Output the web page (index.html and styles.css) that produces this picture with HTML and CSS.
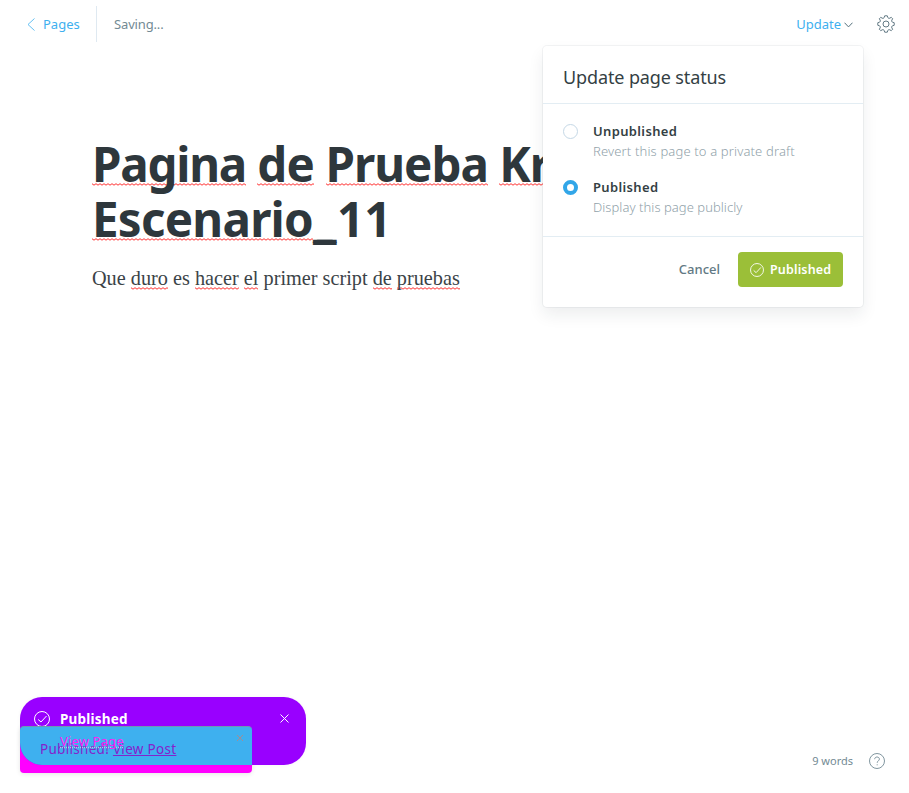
FILE: index.html
```html
<!DOCTYPE html>
<html lang="es">
<head>
<meta charset="utf-8">
<title>Editor</title>
<link rel="stylesheet" href="styles.css">
</head>
<body>
<div class="editor">
  <header class="bar">
    <a class="back"><svg width="8" height="13" viewBox="0 0 8 13"><path d="M7.5.5 1 6.5l6.5 6"/></svg><span>Pages</span></a>
    <span class="saving">Saving...</span>
    <div class="actions">
      <a class="update"><span>Update</span><svg width="9" height="6" viewBox="0 0 9 6"><path d="M.5.7l4 4.2 4-4.2"/></svg></a>
      <svg class="gear" width="18" height="18" viewBox="-9 -9 18 18"><path d="M8.200 -1.300V1.300L6.300 1.900Q5.300 2.600 5.800 3.900L6.700 5.200L5.200 6.700L3.900 5.800Q2.600 5.300 1.900 6.300L1.300 8.200H-1.300L-1.900 6.300Q-2.600 5.300 -3.900 5.800L-5.200 6.700L-6.700 5.200L-5.800 3.900Q-5.300 2.600 -6.300 1.900L-8.200 1.300V-1.300L-6.300 -1.900Q-5.300 -2.600 -5.800 -3.900L-6.700 -5.200L-5.200 -6.700L-3.900 -5.800Q-2.600 -5.300 -1.900 -6.300L-1.300 -8.200H1.300L1.900 -6.300Q2.600 -5.300 3.900 -5.800L5.200 -6.700L6.700 -5.200L5.800 -3.900Q5.300 -2.600 6.300 -1.900Z"/><circle r="3"/></svg>
    </div>
  </header>
  <main class="content">
    <h1 class="title"><span class="bad t1">Pagina</span> <span class="bad t2">de</span> <span class="bad t3">Prueba</span> <span class="bad t4">Kraken</span><br><span class="bad t5">Escenario</span><span class="t6">_</span><span class="t7">11</span></h1>
    <p class="text">Que <span class="bad">duro</span> es <span class="bad">hacer</span> <span class="bad">el</span> primer script <span class="bad">de</span> <span class="bad">pruebas</span></p>
  </main>
</div>

<section class="menu">
  <h2 class="menu-head">Update page status</h2>
  <div class="options">
    <div class="option"><i class="radio"></i><div><div class="name">Unpublished</div><div class="desc d1">Revert this page to a private draft</div></div></div>
    <div class="option"><i class="radio on"></i><div><div class="name">Published</div><div class="desc d2">Display this page publicly</div></div></div>
  </div>
  <footer class="menu-foot">
    <span class="cancel">Cancel</span>
    <span class="button"><svg width="14" height="14" viewBox="0 0 16 16"><circle cx="8" cy="8" r="7.400"/><path d="M4.200 8.500 7 11l5.500-6"/></svg><span>Published</span></span>
  </footer>
</section>

<div class="toast-under"></div>
<div class="toast">
  <div class="overlap"><span class="post">Published! <u>View Post</u></span><svg class="close-small" width="8" height="8" viewBox="0 0 8 8"><path d="M1 1l6 6M7 1 1 7"/></svg></div>
  <svg class="toast-check" width="16" height="16" viewBox="0 0 16 16"><circle cx="8" cy="8" r="7.500"/><path d="M4.200 8.500 7 11l5.500-6"/></svg>
  <div class="toast-copy"><div class="toast-title">Published</div><div class="toast-link">View Page</div></div>
  <svg class="close" width="9" height="9" viewBox="0 0 9 9"><path d="M.5.5l8 8M8.500.5l-8 8"/></svg>
</div>

<div class="status"><span>9 words</span><svg width="16" height="16" viewBox="0 0 16 16"><circle cx="8" cy="8" r="7.500"/><path d="M5.700 6.200C5.700 4.800 6.700 4 8 4s2.400.8 2.400 2.100C10.400 7.700 8.200 7.900 8.200 9.800M8.200 11.300v1"/></svg></div>
</body>
</html>
```

FILE: styles.css
```css
* { box-sizing: border-box; }
body { margin: 0; width: 909px; height: 793px; overflow: hidden; background: #fff; color: #394047; font-family: "Noto Sans", sans-serif; font-size: 13px; }
svg { display: block; fill: none; stroke: currentColor; flex: none; }
.bar { display: flex; align-items: center; height: 48px; padding: 0 15px 0 27px; }
.back { display: flex; align-items: center; gap: 8px; width: 70px; height: 36px; border-right: 1px solid #dfe9f1; color: #3eb0ef; }
.back svg { stroke-width: .8; }
.saving { margin-left: 17px; color: #738a94; letter-spacing: -.15px; }
.actions { display: flex; align-items: center; margin-left: auto; color: #738a94; }
.update { display: flex; align-items: center; gap: 3px; margin-right: 24px; color: #3eb0ef; }
.update svg { color: #55707c; margin-top: 2px; }
.gear { color: #627984; margin-right: -1px; stroke-linejoin: round; }
.content { padding: 88px 0 0 92px; }
.title { margin: 0; font-size: 47.5px; line-height: 55px; font-weight: 700; color: #2e373c; white-space: nowrap; word-spacing: -1px; }
.bad { background: url("data:image/svg+xml,%3Csvg xmlns='http://www.w3.org/2000/svg' width='4' height='3'%3E%3Cpath d='M0 .7 2 2.200 4 .7' fill='none' stroke='%23f33' stroke-width='1'/%3E%3C/svg%3E") repeat-x 0 calc(100% - 10px); }
.t1 { letter-spacing: -1.250px; }
.t2 { letter-spacing: -.8px; }
.t3 { letter-spacing: -1px; }
.t4 { letter-spacing: -1px; }
.t5 { letter-spacing: -.75px; }
.t6 { letter-spacing: 4.500px; text-shadow: 4px 0, 0 -2px, 4px -2px; }
.t7 { letter-spacing: 0; }
.text { margin: 16px 0 0; font: 20.250px/32px "Liberation Serif", serif; color: #3b4347; }
.text .bad { background-position: 0 100%; padding-bottom: 1px; }
.menu { position: absolute; left: 543px; top: 46px; width: 320px; height: 261px; border-radius: 4px; background: #fff; box-shadow: 0 0 0 1px rgba(99,114,130,.08), 0 8px 16px rgba(27,39,51,.08); }
.menu-head { margin: 0; height: 58px; padding: 17px 20px 0; border-bottom: 1px solid #e3edf3; font-size: 18px; line-height: 28px; font-weight: 400; letter-spacing: -.12px; color: #343f44; }
.options { height: 133px; padding: 17px 20px; border-bottom: 1px solid #e3edf3; }
.option { display: flex; gap: 15px; height: 56px; }
.radio { width: 15px; height: 15px; margin-top: 3px; border: 1px solid #c5d8e6; border-radius: 50%; }
.radio.on { border: 4px solid #32a6e8; }
.name { font-size: 13px; line-height: 20px; font-weight: 600; letter-spacing: .35px; color: #343f44; }
.desc { font-size: 13px; line-height: 20px; font-weight: 300; color: #91a2aa; }
.d1 { letter-spacing: .15px; }
.d2 { letter-spacing: .05px; }
.menu-foot { display: flex; align-items: center; justify-content: flex-end; gap: 18px; height: 65px; padding: 0 20px; color: #627984; }
.cancel { font-weight: 500; margin-top: -2px; }
.button { display: flex; align-items: center; gap: 6px; width: 105px; height: 35px; padding-left: 12px; border-radius: 4px; background: #9bbf38; color: #fff; font-weight: 600; font-size: 12.500px; letter-spacing: .15px; }
.toast, .toast-under { position: absolute; left: 20px; }
.toast-under { top: 726px; width: 232px; height: 47px; border-radius: 4px; background: #f0f; box-shadow: 0 1px 5px rgba(0,0,0,.1); }
.toast { display: flex; top: 697px; width: 286px; height: 68px; padding: 12px 17px 0 14px; border-radius: 22px; overflow: hidden; background: #90f; color: #fff; box-shadow: 0 0 4px rgba(0,0,0,.04); }
.overlap { position: absolute; left: 0; top: 29px; width: 232px; height: 39px; border-top: 1px solid #6e96b5; border-radius: 4px 4px 0 0; background: #3eb0ef; color: #8522cc; }
.post { position: absolute; left: 20px; top: 12px; line-height: 20px; font-size: 13.500px; letter-spacing: .3px; white-space: nowrap; }
.close-small { position: absolute; right: 8px; top: 7px; color: #a48c91; }
.toast-check { margin-top: 2px; margin-right: 10px; }
.toast-copy { position: relative; }
.toast-title { line-height: 20px; font-size: 13.500px; font-weight: 700; letter-spacing: .2px; }
.toast-link { margin-top: 2px; line-height: 20px; font-size: 13px; letter-spacing: .15px; color: #ff20f5; text-decoration: underline dotted #b8bde8; }
.close { margin-left: auto; margin-top: 5px; }
.status { position: absolute; right: 24px; bottom: 24px; display: flex; align-items: center; gap: 16px; color: #738a94; font-size: 11px; }
.status span { margin-top: -1px; }
.status svg { stroke-width: .9; }
```
